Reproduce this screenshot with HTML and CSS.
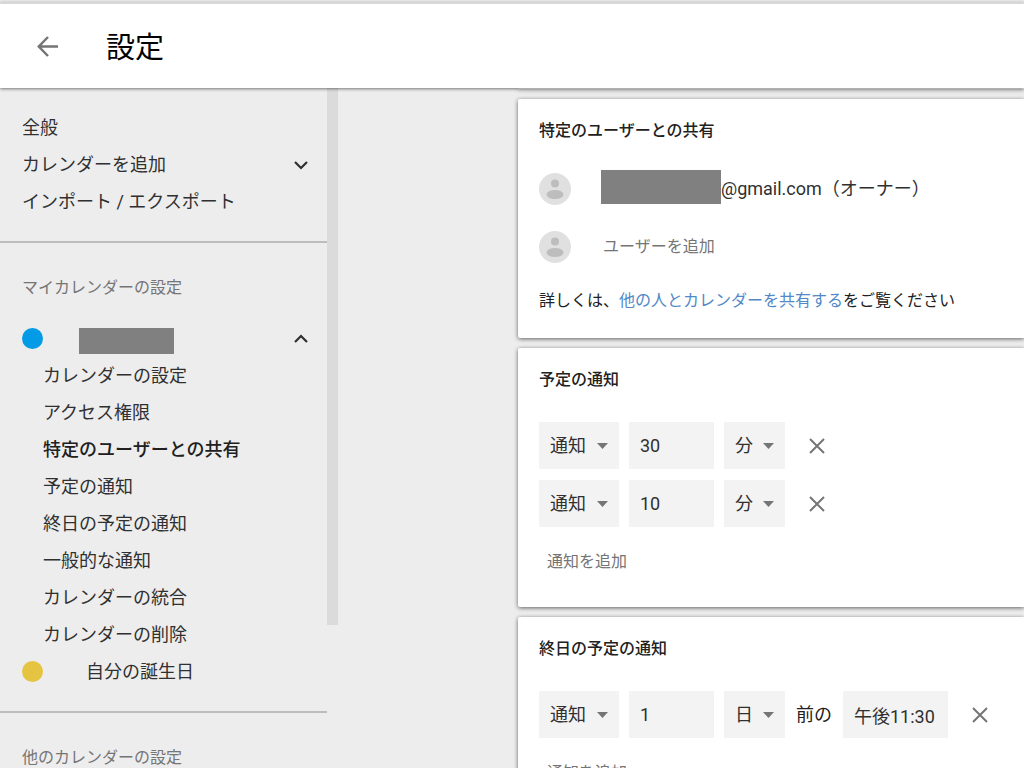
FILE: index.html
```html
<!DOCTYPE html>
<html lang="ja">
<head>
<meta charset="utf-8">
<meta name="viewport" content="width=device-width, initial-scale=1">
<title>設定</title>
<link rel="stylesheet" href="styles.css">
</head>
<body>
<svg class="defs" width="0" height="0" aria-hidden="true">
  <symbol id="arrow" viewBox="0 0 11 6"><path d="M0 0h11L5.500 6z" fill="currentColor"/></symbol>
  <symbol id="cross" viewBox="0 0 16 16"><path d="M1 1l14 14M15 1L1 15" fill="none" stroke="currentColor" stroke-width="2"/></symbol>
  <symbol id="person" viewBox="0 0 32 32"><circle cx="16" cy="16" r="16" fill="#e0e0e0"/><circle cx="16" cy="10.500" r="4" fill="#bdbdbd"/><ellipse cx="16" cy="21.500" rx="8.500" ry="4.500" fill="#bdbdbd"/></symbol>
</svg>
<div class="app">
  <header class="header">
    <button class="icon-button back" type="button" aria-label="戻る">
      <svg width="22" height="22" viewBox="0 0 22 22"><path d="M21 10.500H2M11 1L1.800 10.500l9.200 9.500" fill="none" stroke="currentColor" stroke-width="2.500"/></svg>
    </button>
    <h1 class="title">設定</h1>
  </header>
  <div class="body">
    <aside class="sidebar">
      <nav class="nav">
        <div class="group">
          <a class="item" href="#general">全般</a>
          <button class="item" type="button" aria-expanded="false">カレンダーを追加
            <svg class="chevron" width="14" height="10" viewBox="0 0 14 10"><path d="M1 2l6 6 6-6" fill="none" stroke="currentColor" stroke-width="2.200"/></svg>
          </button>
          <a class="item" href="#import">インポート / エクスポート</a>
        </div>
        <div class="group">
          <h2 class="item caption">マイカレンダーの設定</h2>
          <button class="item" type="button" aria-expanded="true" aria-label="カレンダー">
            <span class="dot blue"></span><span class="mask mask-name"></span>
            <svg class="chevron" width="14" height="10" viewBox="0 0 14 10"><path d="M1 8l6-6 6 6" fill="none" stroke="currentColor" stroke-width="2.200"/></svg>
          </button>
          <a class="item sub" href="#settings">カレンダーの設定</a>
          <a class="item sub" href="#access">アクセス権限</a>
          <a class="item sub current" href="#share">特定のユーザーとの共有</a>
          <a class="item sub" href="#event">予定の通知</a>
          <a class="item sub" href="#allday">終日の予定の通知</a>
          <a class="item sub" href="#other">一般的な通知</a>
          <a class="item sub" href="#integrate">カレンダーの統合</a>
          <a class="item sub" href="#remove">カレンダーの削除</a>
          <a class="item birthday" href="#birthday"><span class="dot yellow"></span>自分の誕生日</a>
        </div>
        <div class="group">
          <h2 class="item caption">他のカレンダーの設定</h2>
        </div>
      </nav>
      <div class="scroll-thumb"></div>
    </aside>
    <main class="main">
      <div class="card-edge"></div>
      <section class="card" id="share">
        <h2 class="heading">特定のユーザーとの共有</h2>
        <div class="people">
          <div class="person">
            <svg width="32" height="32" aria-hidden="true"><use href="#person"/></svg>
            <div class="address"><span class="mask mask-mail"></span>@gmail.com（オーナー）</div>
          </div>
          <div class="person">
            <svg width="32" height="32" aria-hidden="true"><use href="#person"/></svg>
            <input class="add-user" type="text" aria-label="ユーザーを追加" placeholder="ユーザーを追加">
          </div>
        </div>
        <p class="note">詳しくは、<a class="link" href="#help">他の人とカレンダーを共有する</a>をご覧ください</p>
      </section>
      <section class="card" id="event">
        <h2 class="heading">予定の通知</h2>
        <div class="rows">
          <div class="row">
            <label class="select kind"><select aria-label="通知方法"><option>通知</option></select><svg width="11" height="6"><use href="#arrow"/></svg></label>
            <input class="field amount" type="text" aria-label="時間" value="30">
            <label class="select unit"><select aria-label="単位"><option>分</option></select><svg width="11" height="6"><use href="#arrow"/></svg></label>
            <button class="icon-button remove" type="button" aria-label="通知を削除"><svg width="16" height="16"><use href="#cross"/></svg></button>
          </div>
          <div class="row">
            <label class="select kind"><select aria-label="通知方法"><option>通知</option></select><svg width="11" height="6"><use href="#arrow"/></svg></label>
            <input class="field amount" type="text" aria-label="時間" value="10">
            <label class="select unit"><select aria-label="単位"><option>分</option></select><svg width="11" height="6"><use href="#arrow"/></svg></label>
            <button class="icon-button remove" type="button" aria-label="通知を削除"><svg width="16" height="16"><use href="#cross"/></svg></button>
          </div>
        </div>
        <button class="add" type="button">通知を追加</button>
      </section>
      <section class="card" id="allday">
        <h2 class="heading">終日の予定の通知</h2>
        <div class="rows">
          <div class="row">
            <label class="select kind"><select aria-label="通知方法"><option>通知</option></select><svg width="11" height="6"><use href="#arrow"/></svg></label>
            <input class="field amount" type="text" aria-label="日数" value="1">
            <label class="select unit"><select aria-label="単位"><option>日</option></select><svg width="11" height="6"><use href="#arrow"/></svg></label>
            <span class="before">前の</span>
            <input class="field time" type="text" aria-label="時刻" value="午後11:30">
            <button class="icon-button remove" type="button" aria-label="通知を削除"><svg width="16" height="16"><use href="#cross"/></svg></button>
          </div>
        </div>
        <button class="add" type="button">通知を追加</button>
      </section>
    </main>
  </div>
</div>
</body>
</html>
```
FILE: styles.css
```css
* { box-sizing: border-box; }

body {
  margin: 0;
  background: #ededed;
  color: #303030;
  font: 18px/24px Roboto, "Noto Sans CJK JP", sans-serif;
}

h1, h2, p { margin: 0; font-weight: 400; }
a { color: inherit; text-decoration: none; }
svg { display: block; flex: none; }
button, input, select {
  margin: 0;
  padding: 0;
  border: 0;
  border-radius: 0;
  background: none;
  color: inherit;
  font: inherit;
}
.defs { position: absolute; }

.app {
  display: flex;
  flex-direction: column;
  height: 100vh;
  padding-top: 2px;
  overflow: hidden;
}

.header {
  display: flex;
  flex: none;
  align-items: center;
  gap: 42px;
  padding: 22px 32px 21px;
  border-top: 2px solid #d8d8d8;
  background: #fff;
  box-shadow: 0 1px 3px rgba(0, 0, 0, 0.5);
  z-index: 1;
}
.title { padding-top: 4px; color: #000; font-size: 29px; line-height: 37px; }
.icon-button { display: grid; place-items: center; color: #757575; }
.back { width: 32px; height: 32px; }

.body { display: flex; flex: 1; min-height: 0; }

.sidebar { display: flex; flex: none; width: 338px; overflow: hidden; }
.nav { flex: 1; }
.scroll-thumb { width: 11px; height: 79%; background: #dbdbdb; }

.group { padding: 26px 19px 21px 22px; border-bottom: 2px solid #bdbdbd; }
.group:first-child { padding-top: 21px; }
.group:last-child { border-bottom: 0; }
.item {
  display: flex;
  align-items: center;
  width: 100%;
  height: 37px;
  text-align: left;
}
.caption { margin-bottom: 14px; color: #757575; font-size: 16px; }
.sub { padding-left: 21px; }
.current { color: #202020; font-weight: 500; }
.chevron { margin-left: auto; }
.dot { width: 21px; height: 21px; border-radius: 50%; }
.blue { background: #039be5; }
.yellow { background: #e4c441; }
.birthday { gap: 43px; }
.mask { flex: none; background: #808080; }
.mask-name { width: 95px; height: 26px; margin: 4px 0 0 36px; }
.mask-mail { width: 120px; height: 34px; margin-bottom: 4px; }

.main {
  display: flex;
  flex: 1;
  flex-direction: column;
  gap: 10px;
  min-width: 0;
  padding-left: 180px;
  overflow: hidden;
}
.card, .card-edge {
  flex: none;
  border-radius: 2px 0 0 2px;
  background: #fff;
  box-shadow: 0 1px 4px rgba(0, 0, 0, 0.6);
}
.card-edge { height: 1px; }
.card { padding: 20px 21px 25px; }
.heading { color: #212121; font-size: 16px; font-weight: 500; }

.people { display: grid; gap: 20px; margin-top: 27px; }
.person { display: flex; align-items: center; gap: 30px; height: 38px; }
.address { display: flex; align-items: center; }
.add-user { flex: 1; min-width: 0; padding-left: 2px; font-size: 16px; }
.add-user::placeholder { color: #757575; opacity: 1; }
.note { margin-top: 23px; font-size: 16px; color: #212121; }
.link { color: #5088c8; }

.rows { display: grid; gap: 11px; margin-top: 30px; }
.row { display: flex; align-items: center; gap: 10px; }
.select { display: grid; align-items: center; }
.select select, .select svg { grid-area: 1 / 1; }
.select select {
  width: 100%;
  height: 47px;
  padding: 0 11px;
  background: #f3f3f3;
  appearance: none;
}
.select svg { justify-self: end; margin-right: 11px; color: #757575; pointer-events: none; }
.kind { width: 80px; }
.unit { width: 61px; }
.field { height: 47px; padding: 0 11px; background: #f3f3f3; }
.amount { width: 85px; }
.time { width: 105px; }
.before { padding: 0 1px; color: #212121; }
.remove { width: 44px; height: 42px; }
.add { display: block; margin-top: 23px; padding: 0 8px; color: #757575; font-size: 16px; }
#event { padding-bottom: 33px; }
```
